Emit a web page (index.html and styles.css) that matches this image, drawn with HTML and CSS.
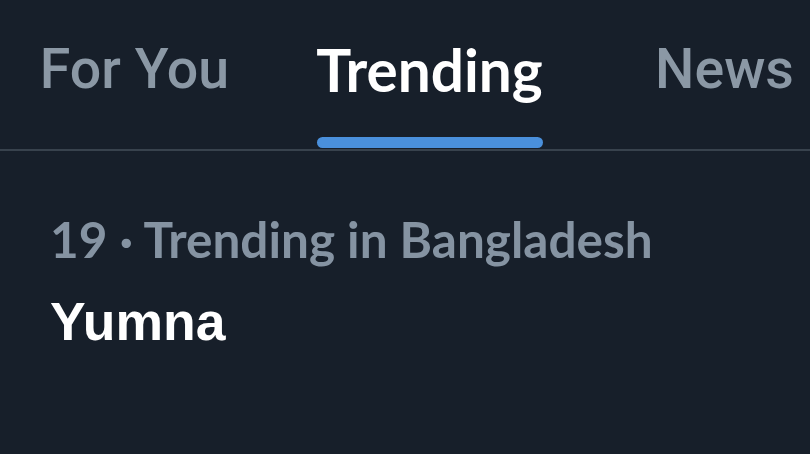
FILE: index.html
```html
<!DOCTYPE html>
<html>
<head>
<meta charset="utf-8">
<link rel="stylesheet" href="styles.css">
</head>
<body>
<div class="page">
  <nav class="tabs">
    <div class="tab"><span class="tab-label">For You</span></div>
    <div class="tab tab-active"><span class="tab-label">Trending</span><span class="indicator"></span></div>
    <div class="tab"><span class="tab-label">News</span></div>
  </nav>
  <section class="trend">
    <div class="trend-meta">19 · Trending in Bangladesh</div>
    <div class="trend-title">Yumna</div>
  </section>
</div>
</body>
</html>
```
FILE: styles.css
```css
html, body {
  margin: 0;
  padding: 0;
  background: #171f2a;
}
.page {
  width: 810px;
  height: 454px;
  overflow: hidden;
  background: #171f2a;
}
.tabs {
  display: flex;
  height: 149px;
  border-bottom: 2px solid #38424d;
  margin-left: -13px;
}
.tab {
  width: 295px;
  flex: none;
  position: relative;
  display: flex;
  justify-content: center;
  padding-top: 34px;
  box-sizing: border-box;
}
.tab-label {
  font-family: Roboto, sans-serif;
  font-weight: 500;
  font-size: 55.5px;
  line-height: 72px;
  color: #8b98a5;
  white-space: nowrap;
}
.tab-active .tab-label {
  font-family: Lato, sans-serif;
  font-weight: 700;
  font-size: 58.5px;
  line-height: 70px;
  color: #ffffff;
}
.indicator {
  position: absolute;
  left: 35px;
  right: 34px;
  bottom: 1px;
  height: 11px;
  border-radius: 6px;
  background: #4a90dc;
}
.trend {
  padding: 59px 0 0 50px;
}
.trend-meta {
  font-family: Lato, sans-serif;
  font-weight: 700;
  font-size: 49.5px;
  line-height: 58px;
  color: #8593a2;
}
.trend-title {
  font-family: "Liberation Sans", Arial, sans-serif;
  font-weight: 700;
  font-size: 53.5px;
  line-height: 62px;
  margin-top: 23px;
  color: #ffffff;
}
```
